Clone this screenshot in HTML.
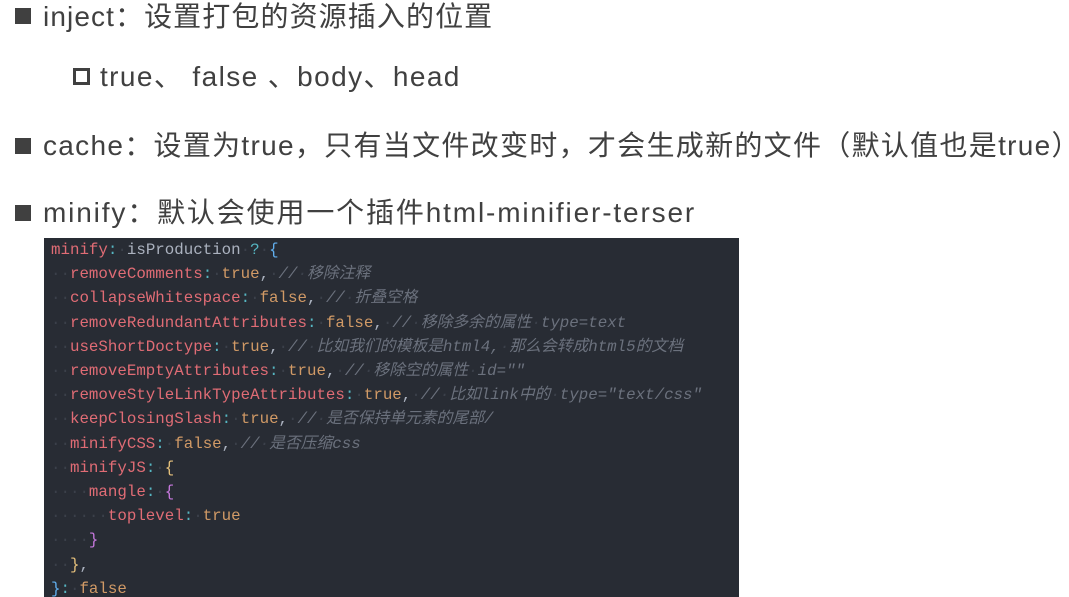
<!DOCTYPE html>
<html><head><meta charset="utf-8"><style>
html,body{margin:0;padding:0;background:#fff;width:1069px;height:597px;overflow:hidden;position:relative}
.t{position:absolute;white-space:nowrap;font-family:"Liberation Sans","Noto Sans CJK SC",sans-serif;font-size:28px;color:#404040;line-height:34px;letter-spacing:1.1px}
.sq{position:absolute;width:16px;height:16px;background:#404040}
.hq{position:absolute;width:11px;height:11px;border:3px solid #404040}
.code{position:absolute;left:44px;top:238px;width:695px;height:359px;background:#282c34;overflow:hidden}
pre{margin:0;padding:0 0 0 7px;font-family:"Liberation Mono","Noto Sans CJK SC",monospace;font-size:15.8px;line-height:24.2px;color:#abb2bf}
.k{color:#e06c75}.v{color:#d19a66}.c{color:#6b717d;font-style:italic}.p{color:#56b6c2}.w{color:#3b404a}.y{color:#e5c07b}.m{color:#c678dd}.b{color:#61afef}
</style></head><body>
<div class="sq" style="left:15px;top:8px"></div>
<div class="t" style="left:43px;top:0px">inject：设置打包的资源插入的位置</div>
<div class="hq" style="left:73px;top:68px"></div>
<div class="t" style="left:100px;top:60px;letter-spacing:1.4px">true、 false 、body、head</div>
<div class="sq" style="left:15px;top:138px"></div>
<div class="t" style="left:43px;top:129px;letter-spacing:1.3px">cache：设置为true，只有当文件改变时，才会生成新的文件（默认值也是true）</div>
<div class="sq" style="left:15px;top:205px"></div>
<div class="t" style="left:43px;top:196px;letter-spacing:1.85px">minify：默认会使用一个插件html-minifier-terser</div>
<div class="code"><pre><span class="k">minify</span><span class="p">:</span><span class="w">·</span>isProduction<span class="w">·</span><span class="p">?</span><span class="w">·</span><span class="b">{</span>
<span class="w">··</span><span class="k">removeComments</span><span class="p">:</span><span class="w">·</span><span class="v">true</span>,<span class="w">·</span><span class="c">//<span class="w">·</span>移除注释</span>
<span class="w">··</span><span class="k">collapseWhitespace</span><span class="p">:</span><span class="w">·</span><span class="v">false</span>,<span class="w">·</span><span class="c">//<span class="w">·</span>折叠空格</span>
<span class="w">··</span><span class="k">removeRedundantAttributes</span><span class="p">:</span><span class="w">·</span><span class="v">false</span>,<span class="w">·</span><span class="c">//<span class="w">·</span>移除多余的属性<span class="w">·</span>type=text</span>
<span class="w">··</span><span class="k">useShortDoctype</span><span class="p">:</span><span class="w">·</span><span class="v">true</span>,<span class="w">·</span><span class="c">//<span class="w">·</span>比如我们的模板是html4,<span class="w">·</span>那么会转成html5的文档</span>
<span class="w">··</span><span class="k">removeEmptyAttributes</span><span class="p">:</span><span class="w">·</span><span class="v">true</span>,<span class="w">·</span><span class="c">//<span class="w">·</span>移除空的属性<span class="w">·</span>id=""</span>
<span class="w">··</span><span class="k">removeStyleLinkTypeAttributes</span><span class="p">:</span><span class="w">·</span><span class="v">true</span>,<span class="w">·</span><span class="c">//<span class="w">·</span>比如link中的<span class="w">·</span>type="text/css"</span>
<span class="w">··</span><span class="k">keepClosingSlash</span><span class="p">:</span><span class="w">·</span><span class="v">true</span>,<span class="w">·</span><span class="c">//<span class="w">·</span>是否保持单元素的尾部/</span>
<span class="w">··</span><span class="k">minifyCSS</span><span class="p">:</span><span class="w">·</span><span class="v">false</span>,<span class="w">·</span><span class="c">//<span class="w">·</span>是否压缩css</span>
<span class="w">··</span><span class="k">minifyJS</span><span class="p">:</span><span class="w">·</span><span class="y">{</span>
<span class="w">····</span><span class="k">mangle</span><span class="p">:</span><span class="w">·</span><span class="m">{</span>
<span class="w">······</span><span class="k">toplevel</span><span class="p">:</span><span class="w">·</span><span class="v">true</span>
<span class="w">····</span><span class="m">}</span>
<span class="w">··</span><span class="y">}</span>,
<span class="b">}</span><span class="p">:</span><span class="w">·</span><span class="v">false</span></pre></div>
</body></html>
